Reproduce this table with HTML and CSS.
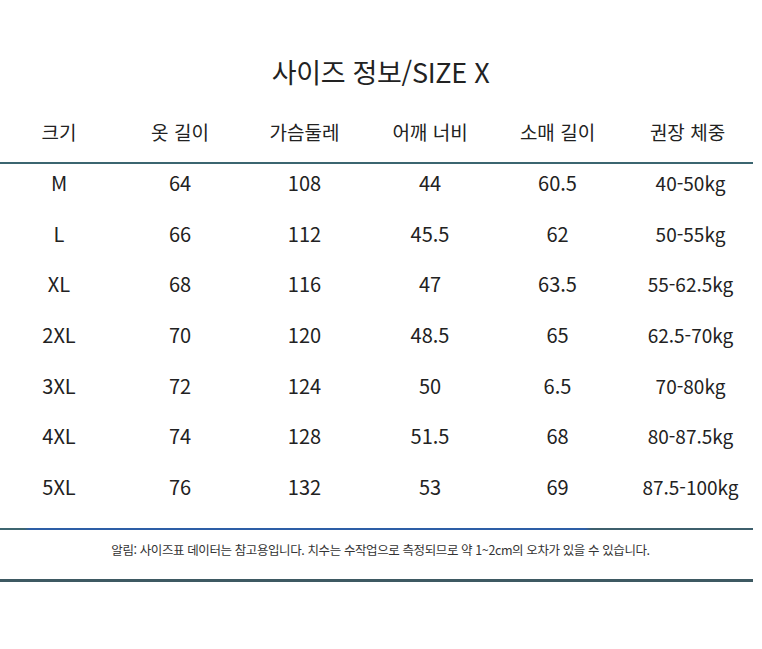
FILE: index.html
```html
<!DOCTYPE html>
<html lang="ko">
<head>
<meta charset="utf-8">
<link rel="stylesheet" href="styles.css">
</head>
<body>
<div class="page">
  <h1 class="title">사이즈 정보/SIZE X</h1>
  <div class="head row">
    <span>크기</span><span>옷 길이</span><span>가슴둘레</span><span>어깨 너비</span><span>소매 길이</span><span>권장 체중</span>
  </div>
  <div class="rule rule-head"></div>
  <div class="body">
    <div class="row"><span>M</span><span>64</span><span>108</span><span>44</span><span>60.5</span><span>40-50kg</span></div>
    <div class="row"><span>L</span><span>66</span><span>112</span><span>45.5</span><span>62</span><span>50-55kg</span></div>
    <div class="row"><span>XL</span><span>68</span><span>116</span><span>47</span><span>63.5</span><span>55-62.5kg</span></div>
    <div class="row"><span>2XL</span><span>70</span><span>120</span><span>48.5</span><span>65</span><span>62.5-70kg</span></div>
    <div class="row"><span>3XL</span><span>72</span><span>124</span><span>50</span><span>6.5</span><span>70-80kg</span></div>
    <div class="row"><span>4XL</span><span>74</span><span>128</span><span>51.5</span><span>68</span><span>80-87.5kg</span></div>
    <div class="row"><span>5XL</span><span>76</span><span>132</span><span>53</span><span>69</span><span>87.5-100kg</span></div>
  </div>
  <div class="rule rule-blue"></div>
  <p class="note">알림: 사이즈표 데이터는 참고용입니다. 치수는 수작업으로 측정되므로 약 1~2cm의 오차가 있을 수 있습니다.</p>
  <div class="rule rule-foot"></div>
</div>
</body>
</html>
```

FILE: styles.css
```css
html, body {
  margin: 0;
  padding: 0;
  background: #ffffff;
}
body {
  font-family: "Noto Sans CJK KR", "Noto Sans", sans-serif;
  color: #222222;
}
.page {
  width: 753px;
  padding-top: 48px;
}
.title {
  margin: 0;
  height: 48px;
  line-height: 48px;
  font-size: 27px;
  font-weight: 400;
  text-align: center;
  padding-left: 8px;
  letter-spacing: -0.3px;
}
.row {
  display: grid;
  grid-template-columns: 118px 124px 125px 126px 129px 131px;
  align-items: center;
  text-align: center;
}
.head {
  height: 61px;
  font-size: 19px;
  padding-top: 5px;
}
.rule {
  width: 753px;
}
.rule-head {
  height: 2px;
  background: #3b6570;
}
.body .row {
  box-sizing: border-box;
  height: 50.7px;
  padding-bottom: 14px;
  font-size: 20px;
}
.body {
  padding-bottom: 9px;
}
.body .row span:last-child {
  padding-left: 6px;
  font-size: 19px;
}
.rule-blue {
  height: 2px;
  background: linear-gradient(to right, #3d6670 0, #3d6670 24px, #2d5ea6 30px, #2d5ea6 585px, #3d5f6c 592px, #3d5f6c 100%);
}
.note {
  margin: 0;
  height: 49px;
  line-height: 40px;
  font-size: 12.5px;
  text-align: center;
  padding-left: 8px;
  letter-spacing: -0.4px;
  color: #333333;
}
.rule-foot {
  height: 3px;
  background: #3e5962;
}
```
